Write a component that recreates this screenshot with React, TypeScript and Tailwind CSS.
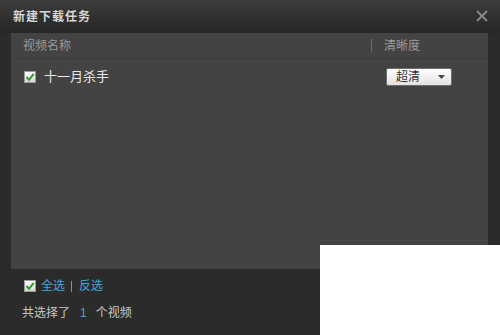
import React from "react";

const font = { fontFamily: '"Liberation Sans", "Noto Sans CJK SC", sans-serif' };

function Check({ className = "" }: { className?: string }) {
  return (
    <span className={`inline-flex h-[12px] w-[12px] items-center justify-center border border-[#9a9a9a] bg-gradient-to-b from-[#ffffff] to-[#d8d8d8] ${className}`}>
      <svg width="10" height="10" viewBox="0 0 10 10">
        <path d="M1.5 5 L4 7.8 L8.8 1.8" fill="none" stroke="#2f9a2f" strokeWidth="2" />
      </svg>
    </span>
  );
}

export default function App() {
  return (
    <div className="relative h-[335px] w-[500px] overflow-hidden bg-[#2b2b2b] text-[12px]" style={font}>
      <div className="flex h-[33px] items-start justify-between bg-gradient-to-b from-[#3c3c3c] to-[#262626] px-[13px] pt-[8px]">
        <span className="text-[12px] font-bold tracking-[1px] text-[#d6d6d6]">新建下载任务</span>
        <svg width="12" height="12" viewBox="0 0 12 12" className="mr-[-1px] mt-[2px]">
          <path d="M1 1 L11 11 M11 1 L1 11" stroke="#8a8a8a" strokeWidth="1.8" />
        </svg>
      </div>
      <div className="mx-[11px] flex h-[236px] w-[477px] flex-col bg-[#434343]">
        <div className="flex h-[26px] items-center border-b border-[#3b3b3b] text-[#9a9a9a]">
          <span className="ml-[12px] flex-1">视频名称</span>
          <span className="h-[13px] w-px bg-[#6a6a6a]" />
          <span className="ml-[12px] w-[104px]">清晰度</span>
        </div>
        <div className="flex h-[36px] items-center">
          <Check className="ml-[13px]" />
          <span className="ml-[8px] text-[13px] text-[#e8e8e8]">十一月杀手</span>
          <span className="flex-1" />
          <div className="mr-[36px] flex h-[18px] w-[66px] items-center justify-between rounded-[2px] border border-[#6e6e6e] bg-gradient-to-b from-[#ffffff] to-[#e2e2e2] px-[9px]">
            <span className="text-[12px] font-normal text-[#333]">超清</span>
            <svg width="7" height="4" viewBox="0 0 7 4" className="mr-[-3px]">
              <path d="M0 0 L7 0 L3.5 4 Z" fill="#444" />
            </svg>
          </div>
        </div>
      </div>
      <div className="flex items-center pl-[24px] pt-[8px]">
        <Check />
        <span className="ml-[5px] text-[#3fa9dc]">全选</span>
        <span className="ml-[6px] mr-[7px] h-[11px] w-px bg-[#3fa9dc]" />
        <span className="text-[#3fa9dc]">反选</span>
      </div>
      <div className="mt-[9px] flex items-center pl-[22px] text-[#c8c8c8]">
        <span>共选择了</span>
        <span className="ml-[10px] text-[#3fa9dc]">1</span>
        <span className="ml-[9px]">个视频</span>
      </div>
      <div className="absolute left-[320px] top-[245px] h-[90px] w-[180px] bg-white" />
    </div>
  );
}
